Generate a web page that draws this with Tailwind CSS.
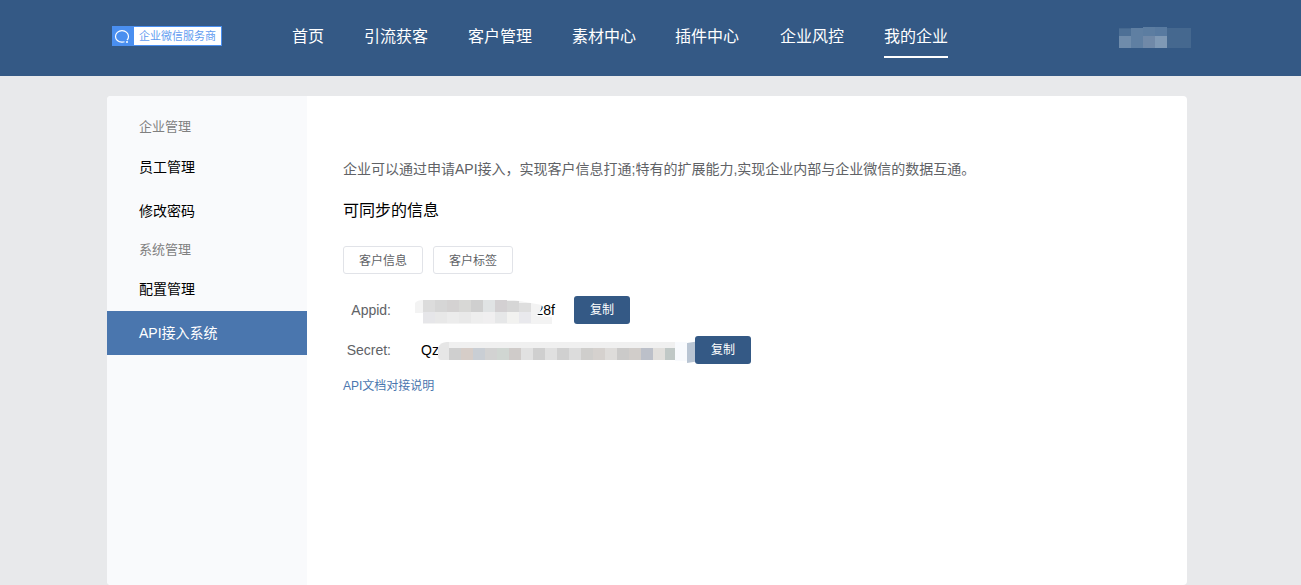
<!DOCTYPE html>
<html lang="zh">
<head>
    <meta charset="UTF-8">
    <meta name="viewport" content="width=device-width, initial-scale=1.0">
    <title>API接入系统</title>
    <script src="https://cdn.jsdelivr.net/npm/@tailwindcss/browser@4"></script>
</head>
<body class="bg-[#e8e9eb] h-[585px] overflow-hidden font-['Liberation_Sans','Noto_Sans_CJK_SC',sans-serif]">

    <!-- Header -->
    <header class="h-[76px] bg-[#345985] flex items-center pl-[112px] relative">
        <div class="w-[110px] h-[20px] flex bg-white border border-[#4a8ff0] mt-[-4px]">
            <div class="w-[21px] h-full bg-[#4a8ff0] flex items-center justify-center pr-[3px]">
                <svg width="16" height="15" viewBox="0 0 16 15" fill="none" stroke="white" stroke-width="1.2">
                    <path d="M10.500 12.800c-.8.3-1.600.4-2.500.4-3.700 0-6.500-2.500-6.500-5.700S4.300 1.700 8 1.700s6.500 2.500 6.500 5.800c0 1.400-.6 2.700-1.500 3.600"/>
                    <circle cx="13" cy="13" r="1" fill="white" stroke="none"/>
                </svg>
            </div>
            <span class="text-[11px] leading-[18px] text-[#5f9cf0] pl-[5px] whitespace-nowrap">企业微信服务商</span>
        </div>
        <nav class="flex gap-[40px] ml-[70px] text-white text-[16px] h-full">
            <a class="h-[58px] leading-[73px]">首页</a>
            <a class="h-[58px] leading-[73px]">引流获客</a>
            <a class="h-[58px] leading-[73px]">客户管理</a>
            <a class="h-[58px] leading-[73px]">素材中心</a>
            <a class="h-[58px] leading-[73px] ml-[-1px]">插件中心</a>
            <a class="h-[58px] leading-[73px] ml-[1px]">企业风控</a>
            <a class="h-[58px] leading-[73px] border-b-2 border-white">我的企业</a>
        </nav>
        <!-- blurred user name -->
        <svg class="absolute left-[1119px] top-[27px]" width="72" height="21">
            <rect x="0" y="1" width="72" height="20" fill="#45688f"/>
            <rect x="0" y="2" width="12" height="7" fill="#4d7096"/>
            <rect x="0" y="9" width="12" height="12" fill="#6f8cab"/>
            <rect x="12" y="1" width="12" height="20" fill="#5f7fa2"/>
            <rect x="24" y="0" width="12" height="9" fill="#5c7da1"/>
            <rect x="24" y="9" width="12" height="12" fill="#7089a8"/>
            <rect x="36" y="0" width="12" height="9" fill="#587aa0"/>
            <rect x="36" y="9" width="12" height="12" fill="#7f99b5"/>
        </svg>
    </header>

    <!-- Card -->
    <main class="mx-[107px] mt-[20px] w-[1080px] h-[489px] bg-white rounded-[4px] flex overflow-hidden">

        <!-- Sidebar -->
        <aside class="w-[200px] bg-[#f9fafc] pt-[20px] shrink-0">
            <div class="h-[22px] leading-[22px] pl-[32px] text-[13px] text-[#808080]">企业管理</div>
            <div class="h-[44px] leading-[44px] pl-[32px] text-[14px] text-black mt-[7px]">员工管理</div>
            <div class="h-[44px] leading-[44px] pl-[32px] text-[14px] text-black">修改密码</div>
            <div class="h-[22px] leading-[22px] pl-[32px] text-[13px] text-[#808080] mt-[6px]">系统管理</div>
            <div class="h-[44px] leading-[44px] pl-[32px] text-[14px] text-black mt-[6px]">配置管理</div>
            <div class="h-[44px] leading-[44px] pl-[32px] text-[14px] text-white bg-[#4a76ae]">API接入系统</div>
        </aside>

        <!-- Content -->
        <section class="flex-1 pl-[36px] pt-[63px]">
            <p class="text-[14px] leading-[20px] text-[#606266]">企业可以通过申请API接入，实现客户信息打通;特有的扩展能力,实现企业内部与企业微信的数据互通。</p>
            <h3 class="text-[16px] leading-[22px] text-black mt-[21px]">可同步的信息</h3>

            <div class="flex gap-[10px] mt-[24px]">
                <span class="w-[80px] h-[28px] leading-[28px] text-center text-[12px] text-[#606266] border border-[#e1e3e8] rounded-[3px]">客户信息</span>
                <span class="w-[80px] h-[28px] leading-[28px] text-center text-[12px] text-[#606266] border border-[#e1e3e8] rounded-[3px]">客户标签</span>
            </div>

            <!-- Appid -->
            <div class="flex items-center h-[28px] mt-[22px] relative">
                <span class="w-[48px] text-right text-[14px] text-[#606266]">Appid:</span>
                <span class="ml-[144px] w-[20px] text-[14px] text-black text-right shrink-0">28f</span>
                <button class="ml-[19px] w-[56px] h-[28px] bg-[#345985] rounded-[3px] text-white text-[12px]">复制</button>
                <svg class="absolute left-[71px] top-[3px]" width="140" height="26">
                    <path d="M1 4 Q3 1 9 1 H100 L128 6 Q127 14 122 17 L138 18 V25 H9 V14 H1 Z" fill="#f3f3f3"/>
                    <g>
                        <rect x="9" y="1" width="12" height="12" fill="#dcdcdc"/>
                        <rect x="21" y="1" width="12" height="12" fill="#d6d6d6"/>
                        <rect x="33" y="1" width="12" height="12" fill="#d4d2d2"/>
                        <rect x="45" y="1" width="12" height="12" fill="#d8d8d6"/>
                        <rect x="57" y="1" width="12" height="12" fill="#cfcfcf"/>
                        <rect x="69" y="1" width="12" height="12" fill="#e0e3e4"/>
                        <rect x="81" y="1" width="12" height="12" fill="#d3d0d2"/>
                        <rect x="93" y="2" width="12" height="11" fill="#d6d6d6"/>
                        <rect x="105" y="4" width="12" height="9" fill="#dedede"/>
                        <rect x="9" y="13" width="12" height="11" fill="#e6e6e9"/>
                        <rect x="21" y="13" width="12" height="11" fill="#e8e8e8"/>
                        <rect x="33" y="13" width="12" height="11" fill="#ececec"/>
                        <rect x="45" y="13" width="12" height="11" fill="#e9e9e9"/>
                        <rect x="57" y="13" width="12" height="11" fill="#eeeeee"/>
                        <rect x="69" y="13" width="12" height="11" fill="#f0eff0"/>
                        <rect x="81" y="13" width="12" height="11" fill="#e6e7e8"/>
                        <rect x="93" y="13" width="12" height="11" fill="#f2f2f0"/>
                        <rect x="105" y="13" width="12" height="11" fill="#e9e9ed"/>
                    </g>
                </svg>
            </div>

            <!-- Secret -->
            <div class="flex items-center h-[28px] mt-[12px] relative">
                <span class="w-[48px] text-right text-[14px] text-[#606266]">Secret:</span>
                <span class="ml-[30px] text-[14px] text-black">Qz</span>
                <button class="absolute left-[352px] z-10 w-[56px] h-[28px] bg-[#345985] rounded-[3px] text-white text-[12px]">复制</button>
                <svg class="absolute left-[94px] top-[5px]" width="270" height="24">
                    <rect x="238" y="1" width="12" height="19" fill="#f8fafd"/>
                    <path d="M1 7 Q3 1 10 1 H238 V19 H4 Q1 19 1 15 Z" fill="#e6e6e6"/>
                    <rect x="12" y="1" width="226" height="6" fill="#f0f0f0"/>
                    <rect x="12" y="7" width="12" height="12" fill="#cfcfcf"/>
                    <rect x="24" y="7" width="12" height="12" fill="#d6cdc8"/>
                    <rect x="36" y="7" width="12" height="12" fill="#c9ced4"/>
                    <rect x="48" y="7" width="12" height="12" fill="#d2d2d2"/>
                    <rect x="60" y="7" width="12" height="12" fill="#d0d6d2"/>
                    <rect x="72" y="7" width="12" height="12" fill="#cfcbc9"/>
                    <rect x="84" y="7" width="12" height="12" fill="#e1e1e1"/>
                    <rect x="96" y="7" width="12" height="12" fill="#cfcfcf"/>
                    <rect x="108" y="7" width="12" height="12" fill="#e0e0e0"/>
                    <rect x="120" y="7" width="12" height="12" fill="#d0d0d0"/>
                    <rect x="132" y="7" width="12" height="12" fill="#dcdcdc"/>
                    <rect x="144" y="7" width="12" height="12" fill="#cfcecc"/>
                    <rect x="156" y="7" width="12" height="12" fill="#d5d1ce"/>
                    <rect x="168" y="7" width="12" height="12" fill="#dedcda"/>
                    <rect x="180" y="7" width="12" height="12" fill="#cbcac9"/>
                    <rect x="192" y="7" width="12" height="12" fill="#d1cdca"/>
                    <rect x="204" y="7" width="12" height="12" fill="#bcc0c9"/>
                    <rect x="216" y="7" width="12" height="12" fill="#e1dfdc"/>
                    <rect x="228" y="7" width="10" height="12" fill="#c0c8c6"/>
                    <path d="M250 2 L263 0 V20 L250 22 Z" fill="#b9c5d3"/>
                </svg>
            </div>

            <a class="block mt-[13px] text-[12px] leading-[18px] text-[#4a76ae]">API文档对接说明</a>
        </section>
    </main>

</body>
</html>
